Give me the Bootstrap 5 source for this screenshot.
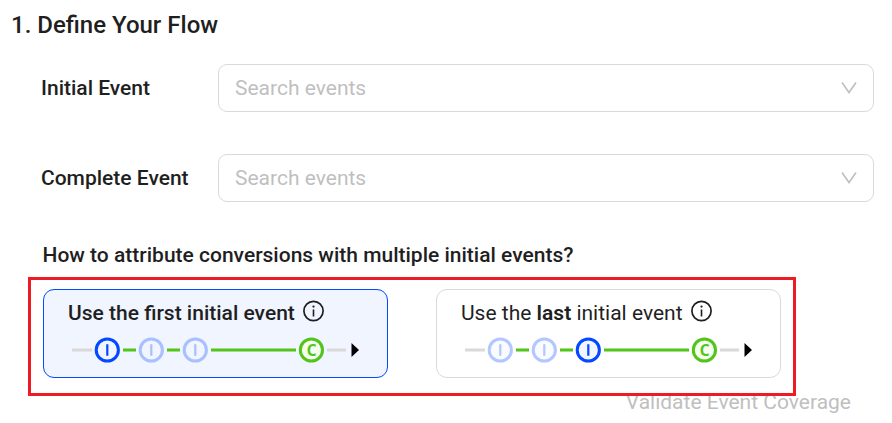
<!DOCTYPE html>
<html lang="en">
<head>
<meta charset="utf-8">
<meta name="viewport" content="width=device-width, initial-scale=1">
<title>Define Your Flow</title>
<link href="https://cdn.jsdelivr.net/npm/bootstrap@5.3.0/dist/css/bootstrap.min.css" rel="stylesheet">
<style>
body{font-family:Roboto,"Liberation Sans",sans-serif;font-size:21px;line-height:24px;color:#1f1f1f;background:#fff;height:423px;overflow:hidden}
.flow-title{font-size:24px;line-height:28px;padding:11px 0 0 11px;height:64px;font-weight:500}
.event-row{height:48px;padding-left:41px;padding-right:18px}
.event-row + .event-row{margin-top:42px}
.event-label{width:177px}
.event-label,.question,.selected .option-text{font-weight:500}
.event-select{border:1px solid #d9d9d9;border-radius:9px;padding:0 16px;color:#bfbfbf}
.question{padding-left:42.5px;margin-top:41px;height:34px}
.option-frame{width:768px;height:119px;border:3px solid #ed1c24;margin-left:28px;padding:9px 12px;gap:48px;z-index:1}
.option{width:345px;height:89px;border:1px solid #d9d9d9;border-radius:11px;padding:11px 24px 0;background:#fff}
.option.selected{border-color:#0448ff;background:#f0f5ff}
.option-text{height:24px;gap:8px}
.option-text svg{margin-bottom:4px}
.option b{font-weight:600}
.timeline{margin:11px 0 0}
.validate{color:#bfbfbf;margin-top:-6px;padding-right:41px}
</style>
</head>
<body>
<svg class="d-none">
  <symbol id="chevron" viewBox="0 0 16 14"><path d="M1 1.5 8 11.5 15 1.5" fill="none" stroke="#bfbfbf" stroke-width="1.6"/></symbol>
  <symbol id="info" viewBox="0 0 22 22"><circle cx="10.5" cy="11" r="9.6" fill="none" stroke="#1f1f1f" stroke-width="1.7"/><path d="M10.5 9.5v7" stroke="#1f1f1f" stroke-width="1.6"/><circle cx="10.5" cy="6.6" r="1.15" fill="#1f1f1f"/></symbol>
  <symbol id="track" viewBox="0 0 296 28">
    <path d="M4 14H24M259 14H278" stroke="#d9d9d9" stroke-width="3"/>
    <path d="M55 14H68M99 14H112M143 14H228" stroke="#52c41a" stroke-width="3"/>
    <circle cx="243.4" cy="14" r="11.1" fill="#f6ffed" stroke="#52c41a" stroke-width="3"/>
    <text x="243.6" y="19.7" text-anchor="middle" font-family="Noto Sans,sans-serif" font-size="16" font-weight="700" textLength="9.8" lengthAdjust="spacingAndGlyphs" fill="#52c41a">C</text>
    <path d="M283.5 7 291 14 283.5 21Z" fill="#000"/>
  </symbol>
  <symbol id="initial" viewBox="0 0 28 28"><circle cx="14" cy="14" r="11.1" fill="#f0f5ff" stroke="#0448ff" stroke-width="3"/><path d="M14 8.2V19.8" stroke="#0448ff" stroke-width="2.2"/></symbol>
</svg>
<main>
  <h1 class="flow-title mb-0">1. Define Your Flow</h1>
  <div class="event-row d-flex">
    <div class="event-label d-flex align-items-center">Initial Event</div>
    <div class="event-select flex-grow-1 d-flex align-items-center justify-content-between"><span>Search events</span><svg width="16" height="14"><use href="#chevron"/></svg></div>
  </div>
  <div class="event-row d-flex">
    <div class="event-label d-flex align-items-center">Complete Event</div>
    <div class="event-select flex-grow-1 d-flex align-items-center justify-content-between"><span>Search events</span><svg width="16" height="14"><use href="#chevron"/></svg></div>
  </div>
  <div class="question">How to attribute conversions with multiple initial events?</div>
  <div class="option-frame d-flex position-relative">
    <div class="option selected">
      <div class="option-text d-flex align-items-center"><span>Use the first initial event</span><svg width="22" height="22"><use href="#info"/></svg></div>
      <svg class="timeline d-block" width="296" height="28">
        <use href="#track" width="296" height="28"/>
        <use href="#initial" x="25.3" width="28" height="28"/>
        <use href="#initial" x="69.3" width="28" height="28" opacity=".3"/>
        <use href="#initial" x="113.3" width="28" height="28" opacity=".3"/>
      </svg>
    </div>
    <div class="option">
      <div class="option-text d-flex align-items-center"><span>Use the <b>last</b> initial event</span><svg width="22" height="22"><use href="#info"/></svg></div>
      <svg class="timeline d-block" width="296" height="28">
        <use href="#track" width="296" height="28"/>
        <use href="#initial" x="25.3" width="28" height="28" opacity=".3"/>
        <use href="#initial" x="69.3" width="28" height="28" opacity=".3"/>
        <use href="#initial" x="113.3" width="28" height="28"/>
      </svg>
    </div>
  </div>
  <div class="validate text-end">Validate Event Coverage</div>
</main>
<script src="https://cdn.jsdelivr.net/npm/bootstrap@5.3.0/dist/js/bootstrap.bundle.min.js"></script>
</body>
</html>
